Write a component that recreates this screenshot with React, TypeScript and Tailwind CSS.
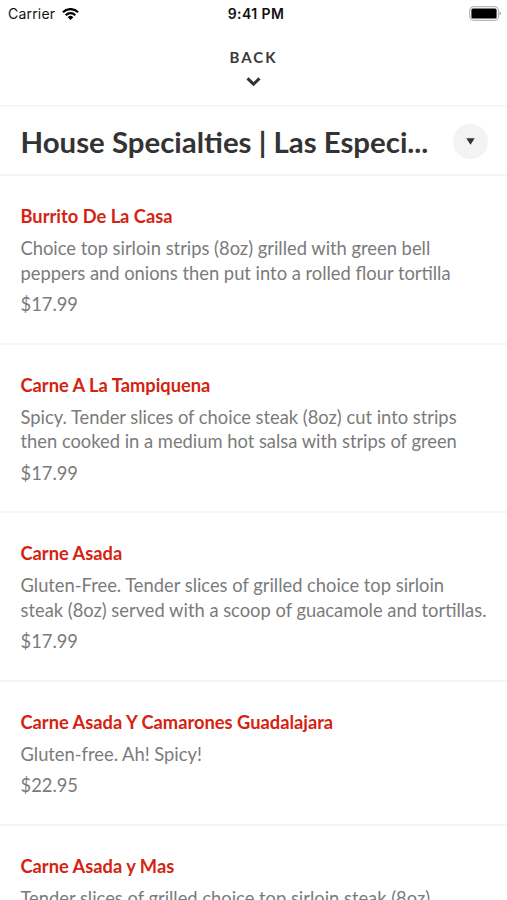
import React from 'react';

interface MenuItem {
  name: string;
  lines: string[];
  price?: string;
}

const items: MenuItem[] = [
  {
    name: 'Burrito De La Casa',
    lines: ['Choice top sirloin strips (8oz) grilled with green bell', 'peppers and onions then put into a rolled flour tortilla'],
    price: '$17.99',
  },
  {
    name: 'Carne A La Tampiquena',
    lines: ['Spicy. Tender slices of choice steak (8oz) cut into strips', 'then cooked in a medium hot salsa with strips of green'],
    price: '$17.99',
  },
  {
    name: 'Carne Asada',
    lines: ['Gluten-Free. Tender slices of grilled choice top sirloin', 'steak (8oz) served with a scoop of guacamole and tortillas.'],
    price: '$17.99',
  },
  {
    name: 'Carne Asada Y Camarones Guadalajara',
    lines: ['Gluten-free. Ah! Spicy!'],
    price: '$22.95',
  },
  {
    name: 'Carne Asada y Mas',
    lines: ['Tender slices of grilled choice top sirloin steak (8oz)'],
  },
];

function StatusBar() {
  return (
    <div className="grid h-[27px] grid-cols-[1fr_auto_1fr] items-center pl-2 pr-[6px] font-['Inter',sans-serif] text-[14px] text-[#111]">
      <div className="flex items-center gap-[7px]">
        <span className="tracking-[0.2px]">Carrier</span>
        <svg width="17" height="12" viewBox="0 0 17 12" fill="none" stroke="black" strokeWidth="2.2">
          <path d="M.9 4.2a10.8 10.8 0 0 1 15.2 0" />
          <path d="M3.7 7.2a6.8 6.8 0 0 1 9.6 0" />
          <path d="M8.5 12 5.7 9.2a4 4 0 0 1 5.6 0Z" fill="black" stroke="none" />
        </svg>
      </div>
      <span className="pl-[3px] text-center font-semibold tracking-[0.4px]">9:41 PM</span>
      <svg className="justify-self-end" width="32" height="15" viewBox="0 0 32 15">
        <rect x="0.7" y="0.7" width="28.8" height="13.6" rx="4" fill="none" stroke="#b8b8b8" strokeWidth="1.2" />
        <rect x="2.4" y="2.5" width="25.2" height="10" rx="1.5" />
        <path d="M30.5 5.5q1.3.7 1.3 2t-1.3 2Z" fill="#9b9b9b" />
      </svg>
    </div>
  );
}

export default function App() {
  return (
    <div className="h-[900px] overflow-hidden bg-white font-['Lato',sans-serif]">
      <StatusBar />

      <button className="flex h-20 w-full flex-col items-center border-b-2 border-[#f6f6f6] pt-[20px]">
        <span className="text-[15px] font-bold leading-[20px] tracking-[2px] text-[#3a3a3a]">BACK</span>
        <svg className="mt-[9px]" width="15" height="11" viewBox="0 0 15 11" fill="none" stroke="#333" strokeWidth="3">
          <path d="m1.5 2.4 6 5.8 6-5.8" />
        </svg>
      </button>

      <div className="flex h-[69.3px] items-center justify-between border-b-2 border-[#f6f6f6] pl-[20.5px] pr-[19px] pt-[1px]">
        <h1 className="whitespace-nowrap pt-[1px] text-[29.4px] font-bold text-[#333]">House Specialties | Las Especi...</h1>
        <button className="flex size-[35px] items-center justify-center rounded-full bg-[#f3f3f3]">
          <svg width="9" height="7" viewBox="0 0 9 7" fill="#333">
            <path d="M.3.3h8.4L4.5 6.7Z" />
          </svg>
        </button>
      </div>

      {items.map((item) => (
        <div key={item.name} className="border-b-2 border-[#f6f6f6] pb-[26.5px] pl-[20.5px] pt-[28px]">
          <h2 className="text-[18.3px] font-bold leading-[24px] text-[#d42310]">{item.name}</h2>
          <div className="mt-2 whitespace-nowrap text-[18.33px] leading-[24.4px] text-[#7b7b7b]">
            {item.lines.map((line) => (
              <p key={line}>{line}</p>
            ))}
          </div>
          {item.price && <p className="mt-[7.2px] text-[18.33px] leading-[24px] text-[#7b7b7b]">{item.price}</p>}
        </div>
      ))}
    </div>
  );
}
